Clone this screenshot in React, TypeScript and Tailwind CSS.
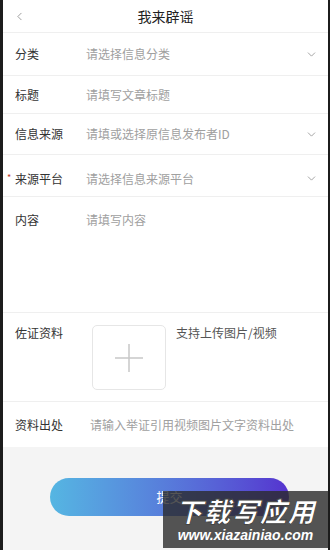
import { ChevronDown, ChevronLeft } from "lucide-react";

const font = { fontFamily: '"Noto Sans CJK SC", "Noto Sans", sans-serif' };

function SelectRow({ label, placeholder, h, required }: { label: string; placeholder: string; h: string; required?: boolean }) {
  return (
    <div className={`relative flex items-center border-b border-[#efefef] pl-[12px] pr-[10px] ${h}`}>
      {required && <span className="absolute left-[4px] top-1/2 -translate-y-[35%] text-[9px] text-[#c0392b]">*</span>}
      <span className="w-[71px] text-[12px] text-[#333]">{label}</span>
      <span className="flex-1 text-[12px] text-[#a0a0a0]">{placeholder}</span>
      <ChevronDown className="h-[13px] w-[13px] text-[#8a8a8a]" strokeWidth={1.4} />
    </div>
  );
}

export default function App() {
  return (
    <div
      className="relative h-[550px] w-[330px] overflow-hidden border-l-[3px] border-r-[2px] border-[#1c1c1c] bg-[#f4f4f4]"
      style={font}
    >
      <div className="bg-white">
        {/* header */}
        <div className="relative flex h-[33px] items-center justify-center border-b border-[#efefef]">
          <ChevronLeft className="absolute left-[10px] h-[13px] w-[13px] text-[#777]" strokeWidth={1.3} />
          <span className="text-[14px] text-[#222]">我来辟谣</span>
        </div>

        <SelectRow label="分类" placeholder="请选择信息分类" h="h-[43px]" />
        <div className="flex h-[38px] items-center border-b border-[#efefef] pl-[12px]">
          <span className="w-[71px] text-[12px] text-[#333]">标题</span>
          <span className="text-[12px] text-[#a0a0a0]">请填写文章标题</span>
        </div>
        <SelectRow label="信息来源" placeholder="请填或选择原信息发布者ID" h="h-[41px]" />
        <SelectRow label="来源平台" placeholder="请选择信息来源平台" h="h-[42px] pt-[6px]" required />

        {/* content */}
        <div className="flex h-[116px] items-start border-b border-[#efefef] pl-[12px] pt-[14px]">
          <span className="w-[71px] text-[12px] text-[#333]">内容</span>
          <span className="text-[12px] text-[#a0a0a0]">请填写内容</span>
        </div>

        {/* evidence */}
        <div className="flex h-[89px] items-start border-b border-[#efefef] pl-[12px] pt-[12px]">
          <span className="w-[77px] text-[12px] leading-[16px] text-[#333]">佐证资料</span>
          <div className="flex h-[65px] w-[74px] items-center justify-center rounded-[5px] border border-[#e6e6e6]">
            <svg width="32" height="32" viewBox="0 0 32 32">
              <path d="M16 2v28M2 16h28" stroke="#c8c8c8" strokeWidth="1.5" />
            </svg>
          </div>
          <span className="ml-[10px] text-[12px] leading-[16px] text-[#555]">支持上传图片/视频</span>
        </div>

        <div className="flex h-[45px] items-center pl-[12px]">
          <span className="w-[75px] text-[12px] text-[#333]">资料出处</span>
          <span className="text-[12px] text-[#a0a0a0]">请输入举证引用视频图片文字资料出处</span>
        </div>
      </div>

      {/* submit */}
      <div className="flex justify-center pl-[8px] pt-[31px]">
        <button className="flex h-[38px] w-[239px] items-center justify-center rounded-full bg-gradient-to-r from-[#55b6e2] to-[#5532cf] text-[13px] text-white">
          提交
        </button>
      </div>

      {/* watermark overlay */}
      <div className="absolute bottom-[2px] left-[160px] flex h-[57px] w-[165px] flex-col items-center justify-center bg-[#2a2a2a]/80">
        <span
          className="text-[27px] font-black italic leading-[30px] tracking-[1px] text-white"
          style={{ WebkitTextStroke: "1px #444" }}
        >
          下载写应用
        </span>
        <span
          className="text-[14px] font-bold italic leading-[18px] text-white"
          style={{ fontFamily: '"Liberation Sans", sans-serif' }}
        >
          www.xiazainiao.com
        </span>
      </div>
    </div>
  );
}
